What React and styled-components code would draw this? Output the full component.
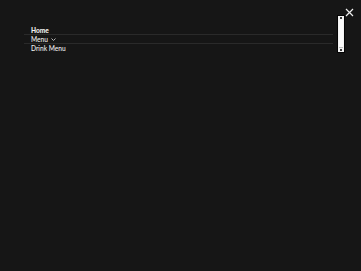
import styled, { createGlobalStyle } from "styled-components";

const GlobalStyle = createGlobalStyle`
  html, body {
    margin: 0;
    padding: 0;
    background: #161616;
  }
  body {
    font-family: Lato, "Noto Sans", sans-serif;
  }
`;

const Overlay = styled.div`
  width: 361px;
  height: 271px;
  background: #161616;
  position: relative;
  padding: 15px 0 0 24px;
  box-sizing: border-box;
`;

const CloseButton = styled.button`
  position: absolute;
  top: 7px;
  right: 7px;
  width: 10px;
  height: 10px;
  padding: 0;
  border: 0;
  background: none;
  cursor: pointer;
  display: flex;
  align-items: center;
  justify-content: center;
`;

const NavPanel = styled.div`
  display: flex;
  align-items: flex-start;
  gap: 4px;
`;

const NavList = styled.ul`
  list-style: none;
  margin: 0;
  padding: 11px 0 0 0;
  width: 309px;
`;

const NavItem = styled.li`
  border-bottom: 1px solid #2a2a2a;
  height: 8px;
  line-height: 8px;
  display: flex;
  align-items: center;
  padding-left: 7px;
  font-size: 6.6px;
  color: #f0f0f0;
  font-weight: ${(p) => (p.$active ? 900 : 500)};
  &:last-child {
    border-bottom: 0;
  }
`;

const Chevron = styled.svg`
  margin-left: 3px;
  margin-top: 1px;
`;

const Scrollbar = styled.div`
  width: 6px;
  height: 36px;
  border: 1px solid #050505;
  background: #f3f3f3;
  display: flex;
  flex-direction: column;
`;

const ScrollArrow = styled.div`
  height: 4px;
  display: flex;
  align-items: center;
  justify-content: center;
  &::before {
    content: "";
    width: 2px;
    height: 2px;
    background: #3a3a3a;
  }
`;

const ScrollThumb = styled.div`
  flex: 1;
  margin: 0 1px;
  background: #fafafa;
  border-bottom: 1px solid #bdbdbd;
`;

export default function App() {
  return (
    <Overlay>
      <GlobalStyle />
      <CloseButton aria-label="Close">
        <svg width="9" height="9" viewBox="0 0 9 9">
          <path d="M1 1L8 8M8 1L1 8" stroke="#eee" strokeWidth="1.2" />
        </svg>
      </CloseButton>
      <NavPanel>
        <NavList>
          <NavItem $active>Home</NavItem>
          <NavItem>
            Menu
            <Chevron width="5" height="3" viewBox="0 0 5 3">
              <path d="M0.5 0.5L2.5 2.5L4.5 0.5" stroke="#b5b5b5" strokeWidth="1" fill="none" />
            </Chevron>
          </NavItem>
          <NavItem>Drink Menu</NavItem>
        </NavList>
        <Scrollbar>
          <ScrollArrow />
          <ScrollThumb />
          <ScrollArrow />
        </Scrollbar>
      </NavPanel>
    </Overlay>
  );
}
